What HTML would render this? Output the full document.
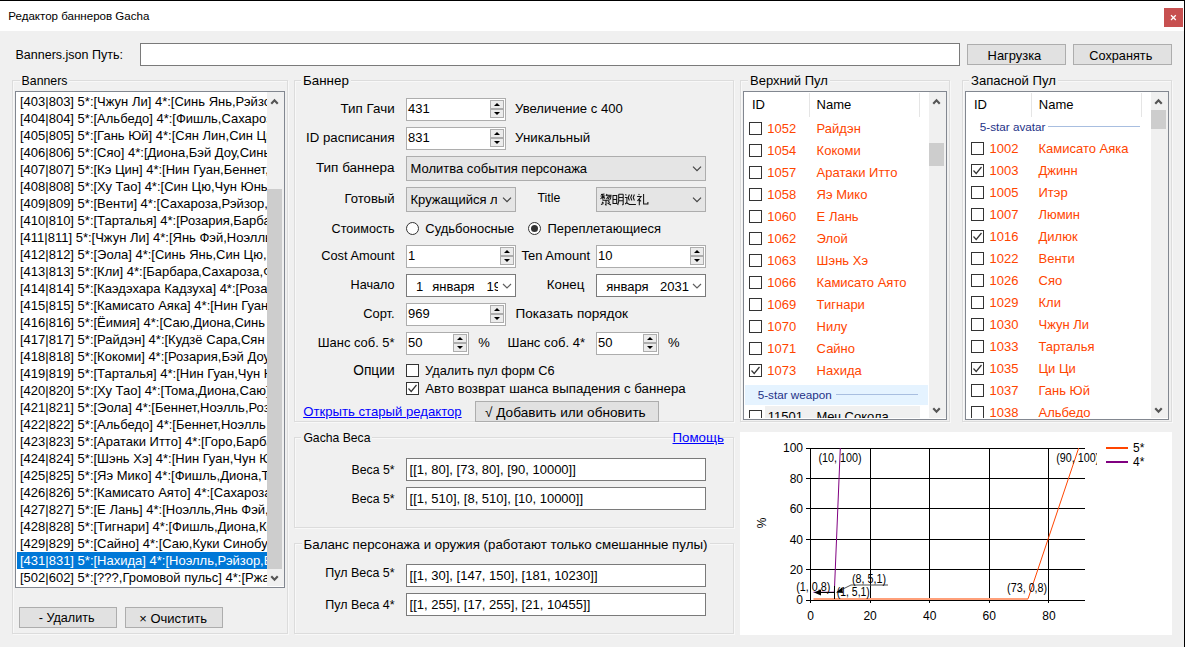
<!DOCTYPE html>
<html><head><meta charset="utf-8"><title>Gacha</title>
<style>
html,body{margin:0;padding:0}
body{width:1185px;height:647px;overflow:hidden;position:relative;background:#f0f0f0;font-family:"Liberation Sans",sans-serif;font-size:13px;color:#000}
.a{position:absolute;box-sizing:border-box}
.t{position:absolute;white-space:nowrap;font-size:13px;line-height:15px}
.row{position:absolute;left:0;width:250px;height:17px;padding-left:3px;box-sizing:border-box;white-space:nowrap;font-size:13px;line-height:15px;padding-top:1px}
svg.a{overflow:visible}
</style></head><body>
<div class="a" style="left:0px;top:0px;width:1185px;height:1px;background:#000"></div>
<div class="a" style="left:1184px;top:0px;width:1px;height:647px;background:#000"></div>
<div class="a" style="left:0px;top:1px;width:1184px;height:30px;background:#fff"></div>
<div class="t" style="top:9.50px;font-size:11.55px;line-height:13px;left:8.30px;">Редактор баннеров Gacha</div>
<div class="a" style="left:1164px;top:8px;width:19px;height:19px;background:#c75050"></div>
<svg class="a" style="left:1170px;top:14px" width="7" height="7" viewBox="0 0 7 7"><path d="M1 1.2L5.8 6M5.8 1.2L1 6" stroke="#fff" stroke-width="1.3"/></svg>
<div class="t" style="top:47.97px;font-size:12.5px;line-height:14px;left:15.50px;">Banners.json Путь:</div>
<div class="a" style="left:140px;top:43px;width:820px;height:23px;background:#fff;border:1px solid #7a7a7a"></div>
<div class="a" style="left:967px;top:44px;width:99px;height:21px;background:#e1e1e1;border:1px solid #adadad"></div>
<div class="t" style="top:48.23px;font-size:12.9px;line-height:15px;left:987.60px;">Нагрузка</div>
<div class="a" style="left:1073px;top:44px;width:99px;height:21px;background:#e1e1e1;border:1px solid #adadad"></div>
<div class="t" style="top:48.29px;font-size:12.72px;line-height:15px;left:1089.30px;">Сохранять</div>
<div class="a" style="left:12px;top:80px;width:276px;height:554px;border:1px solid #dcdcdc;box-shadow:inset 1px 1px 0 #f8f8f8,1px 1px 0 #f8f8f8"></div>
<div class="t" style="left:19.60px;top:74.23px;background:#f0f0f0;padding:0 2px;font-size:12.32px">Banners</div>
<div class="a" style="left:294px;top:80px;width:440px;height:342px;border:1px solid #dcdcdc;box-shadow:inset 1px 1px 0 #f8f8f8,1px 1px 0 #f8f8f8"></div>
<div class="t" style="left:301.00px;top:73.16px;background:#f0f0f0;padding:0 2px;font-size:13.39px">Баннер</div>
<div class="a" style="left:294px;top:437px;width:440px;height:91px;border:1px solid #dcdcdc;box-shadow:inset 1px 1px 0 #f8f8f8,1px 1px 0 #f8f8f8"></div>
<div class="t" style="left:301.40px;top:430.78px;background:#f0f0f0;padding:0 2px;font-size:12.19px">Gacha Веса</div>
<div class="a" style="left:294px;top:543px;width:440px;height:91px;border:1px solid #dcdcdc;box-shadow:inset 1px 1px 0 #f8f8f8,1px 1px 0 #f8f8f8"></div>
<div class="t" style="left:301.50px;top:536.68px;background:#f0f0f0;padding:0 2px;font-size:13.34px">Баланс персонажа и оружия (работают только смешанные пулы)</div>
<div class="a" style="left:740px;top:80px;width:210px;height:342px;border:1px solid #dcdcdc;box-shadow:inset 1px 1px 0 #f8f8f8,1px 1px 0 #f8f8f8"></div>
<div class="t" style="left:748.00px;top:73.30px;background:#f0f0f0;padding:0 2px;font-size:12.99px">Верхний Пул</div>
<div class="a" style="left:962px;top:80px;width:210px;height:342px;border:1px solid #dcdcdc;box-shadow:inset 1px 1px 0 #f8f8f8,1px 1px 0 #f8f8f8"></div>
<div class="t" style="left:969.00px;top:73.26px;background:#f0f0f0;padding:0 2px;font-size:13.1px">Запасной Пул</div>
<div class="a" style="left:15px;top:91px;width:270px;height:497px;background:#fff;border:1px solid #828790"></div>
<div class="a" style="left:17px;top:93px;width:250px;height:493px;overflow:hidden">
<div class="row" style="top:0px;">[403|803] 5*:[Чжун Ли] 4*:[Синь Янь,Рэйзор,Чун Юнь]</div>
<div class="row" style="top:17px;">[404|804] 5*:[Альбедо] 4*:[Фишль,Сахароза,Бэй Доу]</div>
<div class="row" style="top:34px;">[405|805] 5*:[Гань Юй] 4*:[Сян Лин,Син Цю,Ноэлль]</div>
<div class="row" style="top:51px;">[406|806] 5*:[Сяо] 4*:[Диона,Бэй Доу,Синь Янь]</div>
<div class="row" style="top:68px;">[407|807] 5*:[Кэ Цин] 4*:[Нин Гуан,Беннет,Барбара]</div>
<div class="row" style="top:85px;">[408|808] 5*:[Ху Тао] 4*:[Син Цю,Чун Юнь,Синь Янь]</div>
<div class="row" style="top:102px;">[409|809] 5*:[Венти] 4*:[Сахароза,Рэйзор,Ноэлль]</div>
<div class="row" style="top:119px;">[410|810] 5*:[Тарталья] 4*:[Розария,Барбара,Фишль]</div>
<div class="row" style="top:136px;">[411|811] 5*:[Чжун Ли] 4*:[Янь Фэй,Ноэлль,Диона]</div>
<div class="row" style="top:153px;">[412|812] 5*:[Эола] 4*:[Синь Янь,Син Цю,Бэй Доу]</div>
<div class="row" style="top:170px;">[413|813] 5*:[Кли] 4*:[Барбара,Сахароза,Фишль]</div>
<div class="row" style="top:187px;">[414|814] 5*:[Каэдэхара Кадзуха] 4*:[Розария,Бэй Доу]</div>
<div class="row" style="top:204px;">[415|815] 5*:[Камисато Аяка] 4*:[Нин Гуан,Чун Юнь]</div>
<div class="row" style="top:221px;">[416|816] 5*:[Ёимия] 4*:[Саю,Диона,Синь Янь]</div>
<div class="row" style="top:238px;">[417|817] 5*:[Райдэн] 4*:[Кудзё Сара,Сян Лин,Беннет]</div>
<div class="row" style="top:255px;">[418|818] 5*:[Кокоми] 4*:[Розария,Бэй Доу,Синь Янь]</div>
<div class="row" style="top:272px;">[419|819] 5*:[Тарталья] 4*:[Нин Гуан,Чун Юнь,Ян Фэй]</div>
<div class="row" style="top:289px;">[420|820] 5*:[Ху Тао] 4*:[Тома,Диона,Саю]</div>
<div class="row" style="top:306px;">[421|821] 5*:[Эола] 4*:[Беннет,Ноэлль,Розария]</div>
<div class="row" style="top:323px;">[422|822] 5*:[Альбедо] 4*:[Беннет,Ноэлль,Розария]</div>
<div class="row" style="top:340px;">[423|823] 5*:[Аратаки Итто] 4*:[Горо,Барбара,Сян Лин]</div>
<div class="row" style="top:357px;">[424|824] 5*:[Шэнь Хэ] 4*:[Нин Гуан,Чун Юнь,Янь Фэй]</div>
<div class="row" style="top:374px;">[425|825] 5*:[Яэ Мико] 4*:[Фишль,Диона,Тома]</div>
<div class="row" style="top:391px;">[426|826] 5*:[Камисато Аято] 4*:[Сахароза,Ноэлль]</div>
<div class="row" style="top:408px;">[427|827] 5*:[Е Лань] 4*:[Ноэлль,Янь Фэй,Сахароза]</div>
<div class="row" style="top:425px;">[428|828] 5*:[Тигнари] 4*:[Фишль,Диона,Коллеи]</div>
<div class="row" style="top:442px;">[429|829] 5*:[Сайно] 4*:[Саю,Куки Синобу,Кандакия]</div>
<div class="row" style="top:459px;background:#0078d7;color:#fff;">[431|831] 5*:[Нахида] 4*:[Ноэлль,Рэйзор,Беннет]</div>
<div class="row" style="top:476px;">[502|602] 5*:[???,Громовой пульс] 4*:[Ржавый лук]</div>
</div>
<div class="a" style="left:267px;top:92px;width:17px;height:494px;background:#f0f0f0"></div>
<div class="a" style="left:267px;top:189px;width:15px;height:380px;background:#cdcdcd"></div>
<div class="a" style="left:19px;top:607px;width:98px;height:21px;background:#e1e1e1;border:1px solid #adadad"></div>
<div class="t" style="top:610.83px;font-size:12.62px;line-height:15px;left:38.70px;">- Удалить</div>
<div class="a" style="left:125px;top:607px;width:98px;height:21px;background:#e1e1e1;border:1px solid #adadad"></div>
<div class="t" style="top:610.70px;font-size:12.98px;line-height:15px;left:139.30px;">× Очистить</div>
<div class="t" style="top:100.86px;font-size:13.38px;line-height:15px;right:790.40px;text-align:right;">Тип Гачи</div>
<div class="a" style="left:406px;top:98px;width:100px;height:23px;background:#fff;border:1px solid #adadad"></div>
<div class="a" style="left:490px;top:100px;width:14px;height:18px;background:#ececec;border:1px solid #adadad"></div>
<div class="a" style="left:490px;top:108px;width:14px;height:2px;background:#adadad"></div>
<div class="t" style="top:101.00px;font-size:13px;line-height:15px;left:408.10px;">431</div>
<div class="t" style="top:100.96px;font-size:13.09px;line-height:15px;left:515.10px;">Увеличение с 400</div>
<div class="t" style="top:129.72px;font-size:13.23px;line-height:15px;right:790.40px;text-align:right;">ID расписания</div>
<div class="a" style="left:406px;top:127px;width:100px;height:23px;background:#fff;border:1px solid #adadad"></div>
<div class="a" style="left:490px;top:129px;width:14px;height:18px;background:#ececec;border:1px solid #adadad"></div>
<div class="a" style="left:490px;top:137px;width:14px;height:2px;background:#adadad"></div>
<div class="t" style="top:130.00px;font-size:13px;line-height:15px;left:408.10px;">831</div>
<div class="t" style="top:129.90px;font-size:13.29px;line-height:15px;left:515.10px;">Уникальный</div>
<div class="t" style="top:159.61px;font-size:13.53px;line-height:16px;right:790.40px;text-align:right;">Тип баннера</div>
<div class="a" style="left:406px;top:156px;width:300px;height:25px;background:#e5e5e5;border:1px solid #adadad"></div>
<div class="t" style="top:160.50px;font-size:13px;line-height:15px;left:410.50px;">Молитва события персонажа</div>
<div class="t" style="top:191.16px;font-size:13.11px;line-height:15px;right:790.40px;text-align:right;">Готовый</div>
<div class="a" style="left:406px;top:187px;width:110px;height:25px;background:#e5e5e5;border:1px solid #adadad"></div>
<div class="t" style="top:191.50px;font-size:13px;line-height:15px;left:410.50px;width:86.00px;overflow:hidden;">Кружащийся лунный свет</div>
<div class="t" style="top:191.43px;font-size:12.31px;line-height:14px;left:537.50px;">Title</div>
<div class="a" style="left:596px;top:187px;width:110px;height:25px;background:#e5e5e5;border:1px solid #adadad"></div>
<div class="t" style="top:221.53px;font-size:12.6px;line-height:14px;right:790.40px;text-align:right;">Стоимость</div>
<div class="a" style="left:406px;top:222px;width:13px;height:13px;border:1px solid #333;border-radius:50%;background:#fff"></div>
<div class="t" style="top:221.10px;font-size:12.99px;line-height:15px;left:425.30px;">Судьбоносные</div>
<div class="a" style="left:528px;top:222px;width:13px;height:13px;border:1px solid #333;border-radius:50%;background:#fff"></div>
<div class="a" style="left:531px;top:225px;width:7px;height:7px;background:#333;border-radius:50%"></div>
<div class="t" style="top:221.11px;font-size:12.95px;line-height:15px;left:547.50px;">Переплетающиеся</div>
<div class="t" style="top:248.25px;font-size:12.84px;line-height:15px;right:790.40px;text-align:right;">Cost Amount</div>
<div class="a" style="left:406px;top:245px;width:110px;height:23px;background:#fff;border:1px solid #adadad"></div>
<div class="a" style="left:500px;top:247px;width:14px;height:18px;background:#ececec;border:1px solid #adadad"></div>
<div class="a" style="left:500px;top:255px;width:14px;height:2px;background:#adadad"></div>
<div class="t" style="top:248.00px;font-size:13px;line-height:15px;left:408.10px;">1</div>
<div class="t" style="top:248.21px;font-size:12.97px;line-height:15px;left:521.50px;">Ten Amount</div>
<div class="a" style="left:596px;top:245px;width:110px;height:23px;background:#fff;border:1px solid #adadad"></div>
<div class="a" style="left:690px;top:247px;width:14px;height:18px;background:#ececec;border:1px solid #adadad"></div>
<div class="a" style="left:690px;top:255px;width:14px;height:2px;background:#adadad"></div>
<div class="t" style="top:248.00px;font-size:13px;line-height:15px;left:598.10px;">10</div>
<div class="t" style="top:278.21px;font-size:12.66px;line-height:15px;right:790.40px;text-align:right;">Начало</div>
<div class="a" style="left:406px;top:274px;width:110px;height:23px;background:#fff;border:1px solid #7a7a7a"></div>
<div class="a" style="left:407px;top:275px;width:91px;height:21px;overflow:hidden">
<div class="t" style="left:9.00px;top:3.50px">1</div>
<div class="t" style="left:25.20px;top:3.50px">января</div>
<div class="t" style="left:79.50px;top:3.50px">1970</div>
</div>
<div class="t" style="top:276.99px;font-size:13.3px;line-height:15px;left:546.80px;">Конец</div>
<div class="a" style="left:596px;top:274px;width:110px;height:23px;background:#fff;border:1px solid #7a7a7a"></div>
<div class="a" style="left:597px;top:275px;width:95px;height:21px;overflow:hidden">
<div class="t" style="left:9.20px;top:3.50px">января</div>
<div class="t" style="left:63.00px;top:3.50px">2031</div>
</div>
<div class="t" style="top:305.82px;font-size:12.92px;line-height:15px;right:790.40px;text-align:right;">Сорт.</div>
<div class="a" style="left:406px;top:303px;width:100px;height:23px;background:#fff;border:1px solid #adadad"></div>
<div class="a" style="left:490px;top:305px;width:14px;height:18px;background:#ececec;border:1px solid #adadad"></div>
<div class="a" style="left:490px;top:313px;width:14px;height:2px;background:#adadad"></div>
<div class="t" style="top:306.00px;font-size:13px;line-height:15px;left:408.10px;">969</div>
<div class="t" style="top:306.30px;font-size:13.56px;line-height:16px;left:515.60px;">Показать порядок</div>
<div class="t" style="top:334.61px;font-size:12.95px;line-height:15px;right:790.40px;text-align:right;">Шанс соб. 5*</div>
<div class="a" style="left:406px;top:332px;width:63px;height:23px;background:#fff;border:1px solid #adadad"></div>
<div class="a" style="left:453px;top:334px;width:14px;height:18px;background:#ececec;border:1px solid #adadad"></div>
<div class="a" style="left:453px;top:342px;width:14px;height:2px;background:#adadad"></div>
<div class="t" style="top:335.00px;font-size:13px;line-height:15px;left:408.10px;">50</div>
<div class="t" style="top:335.00px;font-size:13px;line-height:15px;left:478.20px;">%</div>
<div class="t" style="top:334.57px;font-size:13.06px;line-height:15px;right:600.00px;text-align:right;">Шанс соб. 4*</div>
<div class="a" style="left:596px;top:332px;width:63px;height:23px;background:#fff;border:1px solid #adadad"></div>
<div class="a" style="left:643px;top:334px;width:14px;height:18px;background:#ececec;border:1px solid #adadad"></div>
<div class="a" style="left:643px;top:342px;width:14px;height:2px;background:#adadad"></div>
<div class="t" style="top:335.00px;font-size:13px;line-height:15px;left:598.10px;">50</div>
<div class="t" style="top:335.00px;font-size:13px;line-height:15px;left:668.00px;">%</div>
<div class="t" style="top:363.43px;font-size:13.76px;line-height:16px;right:790.40px;text-align:right;">Опции</div>
<div class="a" style="left:406px;top:364px;width:13px;height:13px;background:#fff;border:1px solid #333"></div>
<div class="t" style="top:363.38px;font-size:12.75px;line-height:15px;left:425.10px;">Удалить пул форм C6</div>
<div class="a" style="left:406px;top:382px;width:13px;height:13px;background:#fff;border:1px solid #333"></div>
<div class="t" style="top:381.21px;font-size:13.26px;line-height:15px;left:425.20px;">Авто возврат шанса выпадения с баннера</div>
<div class="t" style="top:404.14px;font-size:13.15px;line-height:15px;left:303.20px;color:#0000ff;text-decoration:underline">Открыть старый редактор</div>
<div class="a" style="left:475px;top:401px;width:184px;height:21px;background:#e1e1e1;border:1px solid #adadad"></div>
<div class="t" style="top:404.58px;font-size:13.61px;line-height:16px;left:485.00px;">√ Добавить или обновить</div>
<div class="t" style="top:430.19px;font-size:13.31px;line-height:15px;left:672.50px;color:#0000ff;text-decoration:underline">Помощь</div>
<div class="t" style="top:462.53px;font-size:12.31px;line-height:14px;right:790.40px;text-align:right;">Веса 5*</div>
<div class="a" style="left:406px;top:458px;width:300px;height:23px;background:#fff;border:1px solid #7a7a7a"></div>
<div class="t" style="top:462.00px;font-size:13px;line-height:15px;left:409.60px;">[[1, 80], [73, 80], [90, 10000]]</div>
<div class="t" style="top:491.53px;font-size:12.31px;line-height:14px;right:790.40px;text-align:right;">Веса 5*</div>
<div class="a" style="left:406px;top:487px;width:300px;height:23px;background:#fff;border:1px solid #7a7a7a"></div>
<div class="t" style="top:491.00px;font-size:13px;line-height:15px;left:409.60px;">[[1, 510], [8, 510], [10, 10000]]</div>
<div class="t" style="top:566.28px;font-size:12.46px;line-height:14px;right:790.40px;text-align:right;">Пул Веса 5*</div>
<div class="a" style="left:406px;top:564px;width:300px;height:23px;background:#fff;border:1px solid #7a7a7a"></div>
<div class="t" style="top:568.00px;font-size:13px;line-height:15px;left:409.60px;">[[1, 30], [147, 150], [181, 10230]]</div>
<div class="t" style="top:598.28px;font-size:12.46px;line-height:14px;right:790.40px;text-align:right;">Пул Веса 4*</div>
<div class="a" style="left:406px;top:593px;width:300px;height:23px;background:#fff;border:1px solid #7a7a7a"></div>
<div class="t" style="top:597.00px;font-size:13px;line-height:15px;left:409.60px;">[[1, 255], [17, 255], [21, 10455]]</div>
<div class="a" style="left:743px;top:91px;width:204px;height:329px;background:#fff;border:1px solid #828790"></div>
<div class="t" style="top:97.00px;font-size:13px;line-height:15px;left:752.00px;">ID</div>
<div class="t" style="top:97.00px;font-size:13px;line-height:15px;left:816.60px;">Name</div>
<div class="a" style="left:809px;top:93px;width:1px;height:24px;background:#e5e5e5"></div>
<div class="a" style="left:919px;top:93px;width:1px;height:24px;background:#e5e5e5"></div>
<div class="a" style="left:929px;top:92px;width:17px;height:326px;background:#f0f0f0"></div>
<div class="a" style="left:929px;top:143px;width:15px;height:23px;background:#cdcdcd"></div>
<div class="a" style="left:744px;top:117px;width:185px;height:301px;overflow:hidden">
<div class="a" style="left:5px;top:5px;width:13px;height:13px;border:1px solid #333;background:#fff"></div>
<div class="t" style="left:23.30px;top:4.00px;color:#ff4500">1052</div>
<div class="t" style="left:72.60px;top:4.00px;color:#ff4500">Райдэн</div>
<div class="a" style="left:5px;top:27px;width:13px;height:13px;border:1px solid #333;background:#fff"></div>
<div class="t" style="left:23.30px;top:26.00px;color:#ff4500">1054</div>
<div class="t" style="left:72.60px;top:26.00px;color:#ff4500">Кокоми</div>
<div class="a" style="left:5px;top:49px;width:13px;height:13px;border:1px solid #333;background:#fff"></div>
<div class="t" style="left:23.30px;top:48.00px;color:#ff4500">1057</div>
<div class="t" style="left:72.60px;top:48.00px;color:#ff4500">Аратаки Итто</div>
<div class="a" style="left:5px;top:71px;width:13px;height:13px;border:1px solid #333;background:#fff"></div>
<div class="t" style="left:23.30px;top:70.00px;color:#ff4500">1058</div>
<div class="t" style="left:72.60px;top:70.00px;color:#ff4500">Яэ Мико</div>
<div class="a" style="left:5px;top:93px;width:13px;height:13px;border:1px solid #333;background:#fff"></div>
<div class="t" style="left:23.30px;top:92.00px;color:#ff4500">1060</div>
<div class="t" style="left:72.60px;top:92.00px;color:#ff4500">Е Лань</div>
<div class="a" style="left:5px;top:115px;width:13px;height:13px;border:1px solid #333;background:#fff"></div>
<div class="t" style="left:23.30px;top:114.00px;color:#ff4500">1062</div>
<div class="t" style="left:72.60px;top:114.00px;color:#ff4500">Элой</div>
<div class="a" style="left:5px;top:137px;width:13px;height:13px;border:1px solid #333;background:#fff"></div>
<div class="t" style="left:23.30px;top:136.00px;color:#ff4500">1063</div>
<div class="t" style="left:72.60px;top:136.00px;color:#ff4500">Шэнь Хэ</div>
<div class="a" style="left:5px;top:159px;width:13px;height:13px;border:1px solid #333;background:#fff"></div>
<div class="t" style="left:23.30px;top:158.00px;color:#ff4500">1066</div>
<div class="t" style="left:72.60px;top:158.00px;color:#ff4500">Камисато Аято</div>
<div class="a" style="left:5px;top:181px;width:13px;height:13px;border:1px solid #333;background:#fff"></div>
<div class="t" style="left:23.30px;top:180.00px;color:#ff4500">1069</div>
<div class="t" style="left:72.60px;top:180.00px;color:#ff4500">Тигнари</div>
<div class="a" style="left:5px;top:203px;width:13px;height:13px;border:1px solid #333;background:#fff"></div>
<div class="t" style="left:23.30px;top:202.00px;color:#ff4500">1070</div>
<div class="t" style="left:72.60px;top:202.00px;color:#ff4500">Нилу</div>
<div class="a" style="left:5px;top:225px;width:13px;height:13px;border:1px solid #333;background:#fff"></div>
<div class="t" style="left:23.30px;top:224.00px;color:#ff4500">1071</div>
<div class="t" style="left:72.60px;top:224.00px;color:#ff4500">Сайно</div>
<div class="a" style="left:5px;top:247px;width:13px;height:13px;border:1px solid #333;background:#fff"></div>
<div class="t" style="left:23.30px;top:246.00px;color:#ff4500">1073</div>
<div class="t" style="left:72.60px;top:246.00px;color:#ff4500">Нахида</div>
<div class="a" style="left:1px;top:268px;width:183px;height:20px;background:#e5f3ff"></div>
<div class="t" style="left:13.70px;top:269.60px;font-size:11.7px;color:#1e3287">5-star weapon</div>
<div class="a" style="left:92px;top:277px;width:82px;height:1px;background:#a8bee0"></div>
<div class="a" style="left:21px;top:289px;width:155px;height:20px;background:#f0f0f0"></div>
<div class="a" style="left:5px;top:293px;width:13px;height:13px;border:1px solid #333;background:#fff"></div>
<div class="t" style="left:23.80px;top:292.00px;color:#000">11501</div>
<div class="t" style="left:72.40px;top:292.00px;color:#000">Меч Сокола</div>
</div>
<div class="a" style="left:965px;top:91px;width:204px;height:329px;background:#fff;border:1px solid #828790"></div>
<div class="t" style="top:97.00px;font-size:13px;line-height:15px;left:974.00px;">ID</div>
<div class="t" style="top:97.00px;font-size:13px;line-height:15px;left:1038.80px;">Name</div>
<div class="a" style="left:1031px;top:93px;width:1px;height:24px;background:#e5e5e5"></div>
<div class="a" style="left:1141px;top:93px;width:1px;height:24px;background:#e5e5e5"></div>
<div class="a" style="left:1151px;top:92px;width:17px;height:326px;background:#f0f0f0"></div>
<div class="a" style="left:1151px;top:110px;width:15px;height:19px;background:#cdcdcd"></div>
<div class="a" style="left:966px;top:117px;width:185px;height:301px;overflow:hidden">
<div class="t" style="left:13.80px;top:1.50px;font-size:11.7px;color:#1e3287">5-star avatar</div>
<div class="a" style="left:82px;top:9px;width:92px;height:1px;background:#a8bee0"></div>
<div class="a" style="left:5px;top:25px;width:13px;height:13px;border:1px solid #333;background:#fff"></div>
<div class="t" style="left:23.50px;top:24.00px;color:#ff4500">1002</div>
<div class="t" style="left:72.50px;top:24.00px;color:#ff4500">Камисато Аяка</div>
<div class="a" style="left:5px;top:47px;width:13px;height:13px;border:1px solid #333;background:#fff"></div>
<div class="t" style="left:23.50px;top:46.00px;color:#ff4500">1003</div>
<div class="t" style="left:72.50px;top:46.00px;color:#ff4500">Джинн</div>
<div class="a" style="left:5px;top:69px;width:13px;height:13px;border:1px solid #333;background:#fff"></div>
<div class="t" style="left:23.50px;top:68.00px;color:#ff4500">1005</div>
<div class="t" style="left:72.50px;top:68.00px;color:#ff4500">Итэр</div>
<div class="a" style="left:5px;top:91px;width:13px;height:13px;border:1px solid #333;background:#fff"></div>
<div class="t" style="left:23.50px;top:90.00px;color:#ff4500">1007</div>
<div class="t" style="left:72.50px;top:90.00px;color:#ff4500">Люмин</div>
<div class="a" style="left:5px;top:113px;width:13px;height:13px;border:1px solid #333;background:#fff"></div>
<div class="t" style="left:23.50px;top:112.00px;color:#ff4500">1016</div>
<div class="t" style="left:72.50px;top:112.00px;color:#ff4500">Дилюк</div>
<div class="a" style="left:5px;top:135px;width:13px;height:13px;border:1px solid #333;background:#fff"></div>
<div class="t" style="left:23.50px;top:134.00px;color:#ff4500">1022</div>
<div class="t" style="left:72.50px;top:134.00px;color:#ff4500">Венти</div>
<div class="a" style="left:5px;top:157px;width:13px;height:13px;border:1px solid #333;background:#fff"></div>
<div class="t" style="left:23.50px;top:156.00px;color:#ff4500">1026</div>
<div class="t" style="left:72.50px;top:156.00px;color:#ff4500">Сяо</div>
<div class="a" style="left:5px;top:179px;width:13px;height:13px;border:1px solid #333;background:#fff"></div>
<div class="t" style="left:23.50px;top:178.00px;color:#ff4500">1029</div>
<div class="t" style="left:72.50px;top:178.00px;color:#ff4500">Кли</div>
<div class="a" style="left:5px;top:201px;width:13px;height:13px;border:1px solid #333;background:#fff"></div>
<div class="t" style="left:23.50px;top:200.00px;color:#ff4500">1030</div>
<div class="t" style="left:72.50px;top:200.00px;color:#ff4500">Чжун Ли</div>
<div class="a" style="left:5px;top:223px;width:13px;height:13px;border:1px solid #333;background:#fff"></div>
<div class="t" style="left:23.50px;top:222.00px;color:#ff4500">1033</div>
<div class="t" style="left:72.50px;top:222.00px;color:#ff4500">Тарталья</div>
<div class="a" style="left:5px;top:245px;width:13px;height:13px;border:1px solid #333;background:#fff"></div>
<div class="t" style="left:23.50px;top:244.00px;color:#ff4500">1035</div>
<div class="t" style="left:72.50px;top:244.00px;color:#ff4500">Ци Ци</div>
<div class="a" style="left:5px;top:267px;width:13px;height:13px;border:1px solid #333;background:#fff"></div>
<div class="t" style="left:23.50px;top:266.00px;color:#ff4500">1037</div>
<div class="t" style="left:72.50px;top:266.00px;color:#ff4500">Гань Юй</div>
<div class="a" style="left:5px;top:289px;width:13px;height:13px;border:1px solid #333;background:#fff"></div>
<div class="t" style="left:23.50px;top:288.00px;color:#ff4500">1038</div>
<div class="t" style="left:72.50px;top:288.00px;color:#ff4500">Альбедо</div>
</div>
<div class="a" style="left:740px;top:432px;width:432px;height:203px;background:#fff"></div>
<svg class="a" style="left:0;top:0" width="1185" height="647" viewBox="0 0 1185 647"><path d="M806 600.5H1085" stroke="#000" stroke-width="1"/><path d="M806 569.5H1085" stroke="#000" stroke-width="1"/><path d="M806 539.5H1085" stroke="#000" stroke-width="1"/><path d="M806 508.5H1085" stroke="#000" stroke-width="1"/><path d="M806 478.5H1085" stroke="#000" stroke-width="1"/><path d="M806 448.5H1085" stroke="#000" stroke-width="1"/><path d="M810.5 448V603" stroke="#000" stroke-width="1"/><path d="M870.5 448V603" stroke="#000" stroke-width="1"/><path d="M929.5 448V603" stroke="#000" stroke-width="1"/><path d="M989.5 448V603" stroke="#000" stroke-width="1"/><path d="M1048.5 448V603" stroke="#000" stroke-width="1"/><rect x="813.48" y="598" width="214.56" height="2" fill="#ffa07a"/><polyline points="1028.04,598.784 1078.7,448.0" fill="none" stroke="#ff4500" stroke-width="1"/><polyline points="813.48,592.248 834.34,592.248 840.3,448.0" fill="none" stroke="#800080" stroke-width="1"/><path d="M1106 448H1128" stroke="#ff4500" stroke-width="2"/><path d="M1106 462H1128" stroke="#800080" stroke-width="2"/></svg>
<svg class="a" style="left:0;top:0" width="1185" height="647" font-family="Liberation Sans" font-size="11"><defs><clipPath id="cc"><rect x="740" y="432" width="357" height="203"/></clipPath></defs><path d="M834 592.5H818" stroke="#000" stroke-width="1"/><path d="M814 592.5L821 589.5V595.5Z" fill="#000"/><path d="M834.5 586V599" stroke="#000" stroke-width="1"/><path d="M888 585H851L839 591" stroke="#505050" stroke-width="1" fill="none"/><path d="M836 592.5L842 587.5L843 593Z" fill="#000"/><g clip-path="url(#cc)"><text x="803" y="604.30" text-anchor="end" font-size="12">0</text><text x="803" y="573.90" text-anchor="end" font-size="12">20</text><text x="803" y="543.50" text-anchor="end" font-size="12">40</text><text x="803" y="513.10" text-anchor="end" font-size="12">60</text><text x="803" y="482.70" text-anchor="end" font-size="12">80</text><text x="803" y="452.30" text-anchor="end" font-size="12">100</text><text x="810.50" y="619.5" text-anchor="middle" font-size="12">0</text><text x="870.10" y="619.5" text-anchor="middle" font-size="12">20</text><text x="929.70" y="619.5" text-anchor="middle" font-size="12">40</text><text x="989.30" y="619.5" text-anchor="middle" font-size="12">60</text><text x="1048.90" y="619.5" text-anchor="middle" font-size="12">80</text><text x="818.5" y="461.5" font-size="12" textLength="43" lengthAdjust="spacingAndGlyphs">(10, 100)</text><text x="1056.2" y="461.5" font-size="12" textLength="43" lengthAdjust="spacingAndGlyphs">(90, 100)</text><text x="1007.1" y="591.8" font-size="12" textLength="40.1" lengthAdjust="spacingAndGlyphs">(73, 0,8)</text><text x="796.2" y="591.3" font-size="12" textLength="34.1" lengthAdjust="spacingAndGlyphs">(1, 0,8)</text><text x="836.8" y="595.6" font-size="12" textLength="33" lengthAdjust="spacingAndGlyphs">(1, 5,1)</text><text x="852" y="583.2" font-size="12" textLength="34" lengthAdjust="spacingAndGlyphs">(8, 5,1)</text></g><text x="1133" y="452.4" font-size="12">5*</text><text x="1133" y="466" font-size="12">4*</text><text transform="translate(766,523) rotate(-90)" text-anchor="middle" font-size="12">%</text></svg>
<svg class="a" style="left:0;top:0" width="1185" height="647" viewBox="0 0 1185 647"><g fill="none" stroke="#111" stroke-width="1.05"><path transform="translate(600.0,193.5)" d="M1 1L4.5 0.5M0.5 2.5H5M2.8 0.8V6M2.8 3L0.5 5.5M2.8 3L5 5M7 0.5L6 2.5M6.5 1.8H11L10.5 5.5L9.5 6M8.5 2.5L6.5 5.5M10 2.5L8 5.8M2.5 6.8H9.5M6 7V11.5L5 11M2 8.5L3.5 9.5M1 11L3.5 10M8 8L10 9M7.5 9.5L11 11.5"/><path transform="translate(612.2,193.5)" d="M0.8 2H4.5V10H0.8ZM0.8 6H4.5M6.5 0.8V8L5.5 11.5M11 0.8V11L10 11.5M6.5 0.8H11M6.5 4H11M6.5 7.2H11"/><path transform="translate(624.4,193.5)" d="M5 1L3.8 4L5 7M7.5 1L6.3 4L7.5 7M10 1L8.8 4L10 7M1 0.8L2 1.8M0.5 4H2.5V9L0.8 10.5M2.5 9.5L5 11H11.5"/><path transform="translate(636.6,193.5)" d="M2 0.5L2.8 1.5M0.5 3H4.5L0.8 7.5M2.7 5V11.8M3 6.5L4.5 7.8M7 0.5V10.5H11.3V8.5"/></g></svg>
<svg class="a" style="left:0;top:0" width="1185" height="647" viewBox="0 0 1185 647"><path d="M271.25 103.8L274.5 100.2L277.75 103.8" fill="none" stroke="#555" stroke-width="2.1"/><path d="M271.25 576.2L274.5 579.8L277.75 576.2" fill="none" stroke="#555" stroke-width="2.1"/><path d="M494 106L497 103L500 106Z" fill="#000"/><path d="M494 112L497 115L500 112Z" fill="#000"/><path d="M494 135L497 132L500 135Z" fill="#000"/><path d="M494 141L497 144L500 141Z" fill="#000"/><path d="M693.0 166.6L697 170.6L701.0 166.6" fill="none" stroke="#444" stroke-width="1.2"/><path d="M503.0 197.6L507 201.6L511.0 197.6" fill="none" stroke="#444" stroke-width="1.2"/><path d="M693.0 197.6L697 201.6L701.0 197.6" fill="none" stroke="#444" stroke-width="1.2"/><path d="M504 253L507 250L510 253Z" fill="#000"/><path d="M504 259L507 262L510 259Z" fill="#000"/><path d="M694 253L697 250L700 253Z" fill="#000"/><path d="M694 259L697 262L700 259Z" fill="#000"/><path d="M503.0 284.0L507 288.0L511.0 284.0" fill="none" stroke="#606060" stroke-width="1.2"/><path d="M693.0 284.0L697 288.0L701.0 284.0" fill="none" stroke="#606060" stroke-width="1.2"/><path d="M494 311L497 308L500 311Z" fill="#000"/><path d="M494 317L497 320L500 317Z" fill="#000"/><path d="M457 340L460 337L463 340Z" fill="#000"/><path d="M457 346L460 349L463 346Z" fill="#000"/><path d="M647 340L650 337L653 340Z" fill="#000"/><path d="M647 346L650 349L653 346Z" fill="#000"/><path d="M408.5 388.5L411.2 391.5L416.5 385" fill="none" stroke="#333" stroke-width="1.2"/><path d="M933.25 103.8L936.5 100.2L939.75 103.8" fill="none" stroke="#555" stroke-width="2.1"/><path d="M933.25 408.2L936.5 411.8L939.75 408.2" fill="none" stroke="#555" stroke-width="2.1"/><path d="M751.5 370.5L754.2 373.5L759.5 367" fill="none" stroke="#333" stroke-width="1.2"/><path d="M1155.25 103.8L1158.5 100.2L1161.75 103.8" fill="none" stroke="#555" stroke-width="2.1"/><path d="M1155.25 408.2L1158.5 411.8L1161.75 408.2" fill="none" stroke="#555" stroke-width="2.1"/><path d="M973.5 170.5L976.2 173.5L981.5 167" fill="none" stroke="#333" stroke-width="1.2"/><path d="M973.5 236.5L976.2 239.5L981.5 233" fill="none" stroke="#333" stroke-width="1.2"/><path d="M973.5 368.5L976.2 371.5L981.5 365" fill="none" stroke="#333" stroke-width="1.2"/></svg>
</body></html>
